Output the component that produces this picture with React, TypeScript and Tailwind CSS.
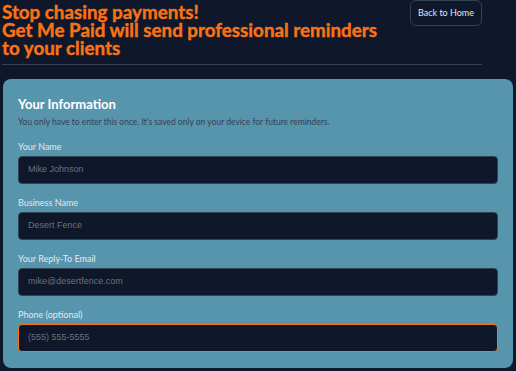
import React from 'react';

const fields = [
  { label: 'Your Name', placeholder: 'Mike Johnson' },
  { label: 'Business Name', placeholder: 'Desert Fence' },
  { label: 'Your Reply-To Email', placeholder: 'mike@desertfence.com' },
  { label: 'Phone (optional)', placeholder: '(555) 555-5555', focused: true },
];

const App: React.FC = () => {
  return (
    <div className="min-h-screen bg-[#0f172a] font-['Lato','Noto_Sans',sans-serif] overflow-hidden">
      <header className="w-[480px] ml-[2px] flex justify-between items-start">
        <h1 className="text-[18.8px] leading-[18px] font-bold text-[#f97316] pt-[3px] [-webkit-text-stroke:0.4px_#f97316]">
          Stop chasing payments!
          <br />
          Get Me Paid will send professional reminders
          <br />
          to your clients
        </h1>
        <button className="h-[26px] px-[7px] border border-[#334155] rounded-md text-[9px] text-[#e2e8f0]">
          Back to Home
        </button>
      </header>
      <div className="w-[480px] ml-[2px] mt-[7px] border-t border-[#334155]" />

      <section className="mx-[3px] mt-[14px] bg-[#5795ad] rounded-lg px-[15px] pt-[17px] pb-[16px]">
        <h2 className="text-[13px] font-bold text-white leading-[16px]">Your Information</h2>
        <p className="mt-[4px] text-[8.5px] text-[#334155] leading-[12px]">
          You only have to enter this once. It's saved only on your device for future reminders.
        </p>
        <div className="mt-[11px] space-y-[11px]">
          {fields.map(f => (
            <div key={f.label}>
              <label className="block text-[9px] text-[#e2e8f0] leading-[16px] mb-[1px]">{f.label}</label>
              <div
                className={`h-[28px] rounded-[4px] bg-[#0f172a] border flex items-center px-[9px] ${
                  f.focused ? 'border-[#f97316]' : 'border-[#334155]'
                }`}
              >
                <span className="font-['Liberation_Sans',Arial,sans-serif] text-[9px] text-[#6b7280]">
                  {f.placeholder}
                </span>
              </div>
            </div>
          ))}
        </div>
      </section>
    </div>
  );
};

export default App;
